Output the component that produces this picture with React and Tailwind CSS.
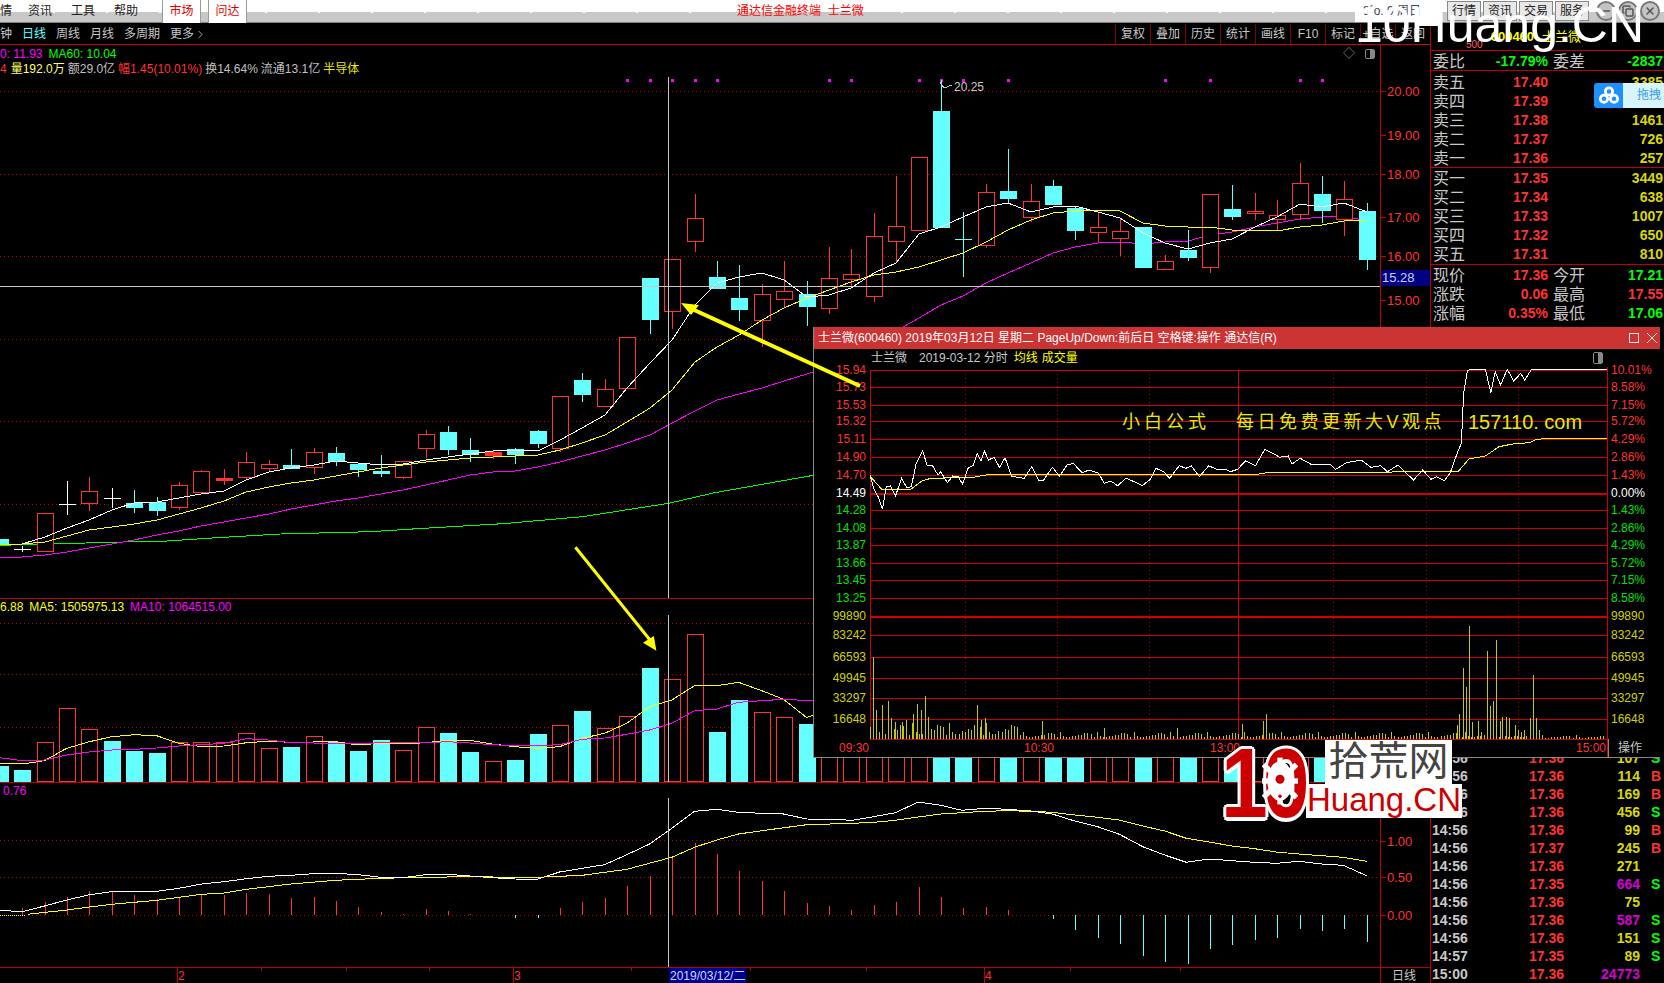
import React from "react";
import { ChevronRight, Minus, Copy, X as XIcon } from "lucide-react";

const RED = "#ff3232", LINE = "#c00000", CY = "#66ffff", YL = "#ffff00", MG = "#ff00ff", GR = "#00ff00";
const X = (i) => Math.round(22.2 + 22.41 * i);
const z4 = ([x, y]) => [x / 1.889, 340 + y / 3];
const z6 = ([x, y]) => [x / 1.889, 770 + y / 3];
const z5 = ([x, y]) => [830 + x / 1.88, 740 + y / 3];
const z3 = ([x, y]) => [810 + x / 1.836, 320 + y / 3];
const byIdx = (a) => a.map((y, i) => [X(i), y]);

const candles = [
  [-1,"c",539,539,544,544],[0,"w",546,549,549,552],[1,"r",513,513,551,551],[2,"w",481,504,504,515],[3,"r",477,491,503,511],[4,"w",488,498,498,508],
  [5,"c",490,503,507,513],[6,"c",497,502,510,516],[7,"r",482,485,507,510],[8,"r",470,471,492,493],[9,"s",469,478,480,485],[10,"r",452,462,477,480],
  [11,"r",460,464,468,472],[12,"c",449,465,468,468],[13,"r",448,452,467,474],[14,"c",447,453,461,466],[15,"c",463,464,469,477],[16,"c",455,471,473,477],
  [17,"r",461,461,477,479],[18,"r",430,434,448,458],[19,"c",426,432,449,455],[20,"c",438,450,454,462],[21,"s",451,452,455,459],[22,"c",448,449,454,464],
  [23,"c",430,431,443,448],[24,"r",396,396,448,452],[25,"c",373,380,394,402],[26,"r",379,389,406,407],[27,"r",337,337,388,388],[28,"c",278,278,319,334],
  [29,"r",259,259,311,329],[30,"r",194,218,241,252],[31,"c",261,277,288,288],[32,"c",265,298,309,321],[33,"r",284,294,320,347],[34,"r",261,291,299,307],
  [35,"c",281,294,306,326],[36,"r",247,278,308,314],[37,"r",249,274,279,287],[38,"r",213,236,296,302],[39,"r",176,226,241,262],[40,"r",157,157,230,230],
  [41,"c",80,111,227,227],[42,"x",212,239,239,277],[43,"r",184,192,245,248],[44,"c",149,191,198,203],[45,"r",184,201,217,222],[46,"c",180,186,204,204],
  [47,"c",207,208,230,240],[48,"r",213,227,232,242],[49,"r",218,231,238,256],[50,"c",227,227,267,268],[51,"r",255,261,269,269],[52,"c",230,250,257,261],
  [53,"r",194,194,267,273],[54,"c",185,209,216,220],[55,"r",193,211,213,220],[56,"r",200,215,219,230],[57,"r",163,183,214,220],[58,"c",176,194,210,223],
  [59,"r",181,199,219,236],[60,"c",203,211,259,270],
];
const ma5 = [544,537,528,520,510,503,502,498,494,491,480,472,468,465,461,463,465,464,460,457,454,451,450,451,440,428,415,388,363,340,305,283,277,273,280,297,295,288,273,263,234,227,217,207,203,212,207,206,212,218,233,243,249,243,239,227,217,204,207,203,212];
const ma10 = [544,542,536,530,527,524,520,514,508,501,492,487,483,480,476,472,468,465,462,460,458,457,456,455,450,443,435,422,408,390,362,347,335,320,308,298,290,282,275,272,267,260,253,242,230,220,213,211,210,211,223,226,227,227,230,230,231,227,225,221,220];
const ma20 = [557,555,552,548,544,540,535,531,526,522,518,514,509,505,501,498,494,490,485,480,475,472,471,467,462,456,450,443,435,423,411,400,394,388,381,374,367,355,345,331,318,305,296,283,273,263,253,247,243,242,244,242,241,235,232,227,223,219,217,216,221];
const ma60 = [[0,616],[232,606],[316,603],[400,594],[530,582],[700,575],[800,565],[950,551],[1100,530],[1263,490],[1350,458],[1540,405]].map(z4);
const dots = [27,28,29,30,31,36,37,40,41,42,44,51,53,57,58];

const vols = {"-1":766,0:770,1:742,2:708,3:729,4:741,5:751,6:753,7:742,8:742,9:742,10:733,11:748,12:747,13:736,14:742,15:751,16:740,17:750,18:727,19:733,20:752,21:761,22:760,23:734,24:725,25:711,26:728,27:716,28:668,29:679,30:634,31:732,32:700,33:712,34:717,35:724};
const cyanVol = [-1,0,4,5,6,12,14,15,16,19,20,22,23,25,28,31,32,35,41,42,44,46,47,50,52,54,58,60];
const volMa5 = [[0,1270],[42,1272],[84,1262],[126,1225],[169,1205],[211,1190],[254,1184],[296,1187],[338,1210],[381,1220],[423,1218],[466,1208],[507,1204],[549,1207],[634,1205],[677,1215],[719,1210],[761,1212],[804,1208],[845,1201],[888,1201],[930,1212],[972,1220],[1015,1225],[1057,1220],[1100,1195],[1142,1180],[1184,1150],[1227,1100],[1269,1080],[1312,1037],[1354,1037],[1395,1027],[1439,1052],[1480,1078],[1524,1133],[1540,1122]].map(z4);
const volMa10 = [[0,1253],[42,1262],[84,1260],[126,1245],[169,1236],[211,1230],[254,1228],[296,1224],[338,1218],[381,1214],[423,1210],[466,1196],[507,1200],[549,1208],[634,1210],[677,1211],[719,1208],[761,1208],[804,1208],[845,1205],[888,1209],[930,1214],[972,1217],[1015,1217],[1057,1214],[1100,1198],[1142,1194],[1184,1183],[1227,1170],[1269,1150],[1312,1112],[1354,1107],[1395,1087],[1439,1082],[1480,1078],[1540,1083]].map(z4);

const difA = [[0,421],[42,425],[84,408],[126,390],[169,374],[211,365],[296,364],[338,355],[381,342],[423,335],[466,326],[507,319],[549,316],[592,311],[634,310],[677,314],[719,322],[761,323],[804,314],[845,313],[888,318],[930,323],[972,327],[1015,328],[1057,306],[1100,295],[1142,284],[1184,254],[1227,222],[1269,175],[1312,124],[1354,118],[1395,127],[1439,130],[1480,132],[1524,147],[1568,148]].map(z6);
const difB = [[0,238],[42,241],[82,230],[123,218],[166,186],[208,196],[248,211],[292,205],[334,208],[377,213],[418,222],[460,243],[503,260],[544,283],[588,320],[629,345],[670,367],[713,357],[755,362],[798,367],[839,370],[881,364],[924,372],[965,376],[1009,407]].map(z5);
const deaA = [[52,433],[126,420],[169,411],[211,403],[296,391],[338,382],[381,373],[423,369],[466,358],[549,342],[634,331],[719,325],[804,322],[888,320],[972,322],[1015,322],[1100,316],[1184,298],[1269,262],[1312,232],[1354,210],[1395,192],[1439,182],[1524,164],[1568,162]].map(z6);
const deaB = [[0,252],[42,250],[82,247],[123,241],[166,231],[208,222],[248,218],[292,214],[334,212],[377,214],[418,217],[460,225],[503,232],[544,240],[588,258],[629,273],[670,295],[713,306],[755,318],[798,326],[839,336],[881,342],[924,347],[965,352],[1009,364]].map(z5);
const histA = [414,397,381,363,363,375,388,380,372,375,369,372,384,381,393,411,426,432,417,423,432,436,443,443,414,396,384,348,318,265,219,252,303,333,363,399,408];
const histB = [510,495,486,441,471,504,501,510,525,537,570,594,612,648,666,672,627,615,600,594,567,573,567,606];
const hist = [...histA.map((z) => 770 + z / 3), ...histB.map((z) => 740 + z / 3)];

const winPrice = [[110,465],[118,510],[125,530],[133,568],[140,500],[148,498],[157,528],[168,475],[178,503],[186,500],[195,430],[207,392],[215,437],[225,437],[235,465],[240,455],[252,488],[262,468],[272,470],[280,492],[290,445],[300,435],[307,400],[314,422],[320,393],[328,420],[338,412],[348,442],[358,413],[370,468],[380,472],[393,475],[407,440],[420,482],[428,482],[445,442],[458,468],[472,435],[483,430],[500,458],[512,450],[530,460],[540,490],[552,483],[565,497],[580,475],[595,485],[610,497],[625,478],[635,445],[650,455],[660,475],[678,437],[690,445],[700,438],[715,470],[732,437],[745,447],[762,447],[772,455],[785,448],[800,422],[818,437],[835,388],[850,400],[862,412],[878,408],[885,432],[900,415],[920,433],[955,433],[965,448],[985,428],[1012,420],[1030,442],[1048,437],[1060,455],[1080,435],[1095,460],[1108,480],[1125,450],[1140,478],[1150,470],[1165,482],[1175,460],[1190,392],[1196,370],[1200,220],[1207,152],[1212,148],[1240,148],[1250,218],[1258,155],[1268,195],[1280,148],[1292,183],[1305,160],[1312,180],[1325,148],[1464,148]].map(z3);
const winAvg = [[110,468],[133,510],[185,508],[205,483],[222,475],[300,472],[330,463],[820,463],[845,457],[1040,457],[1100,455],[1190,455],[1210,417],[1240,408],[1265,380],[1290,372],[1320,368],[1335,358],[1360,355],[1464,355]].map(z3);
const winRows = [149,200,254,304,358,410,464,519,569,623,674,728,780,833,888,946,1010,1073,1133,1196,1258];
const leftLabels = ["15.94","15.73","15.53","15.32","15.11","14.90","14.70","14.49","14.28","14.08","13.87","13.66","13.45","13.25","99890","83242","66593","49945","33297","16648"];
const rightLabels = ["10.01%","8.58%","7.15%","5.72%","4.29%","2.86%","1.43%","0.00%","1.43%","2.86%","4.29%","5.72%","7.15%","8.58%","99890","83242","66593","49945","33297","16648"];
const labelColor = (i) => (i < 7 ? "fill-[#ff3232]" : i === 7 ? "fill-white" : i < 14 ? "fill-[#00e000]" : "fill-[#d0d000]");
const spikes = [[117,1010],[122,1170],[133,1155],[145,1143],[150,1195],[157,1205],[170,1205],[178,1200],[190,1183],[198,1152],[205,1170],[212,1128],[218,1190],[307,1155],[315,1200],[322,1195],[426,1203],[540,1225],[675,1225],[794,1212],[832,1202],[838,1182],[1188,1215],[1193,1183],[1200,1045],[1205,1100],[1211,918],[1216,1205],[1227,1203],[1233,1235],[1244,993],[1250,1158],[1255,1143],[1260,960],[1267,1203],[1272,1190],[1278,1190],[1284,1195],[1295,1215],[1300,1230],[1306,1235],[1312,1230],[1322,1195],[1328,1065],[1334,1195],[1340,1230],[1345,1245]];
const pattern = [9,5,12,7,4,10,6,3,8,5,11,4];
const baseVol = Array.from({ length: 240 }, (_, k) => {
  const p = pattern[(k * 7) % 12];
  const s = k < 50 ? 1.3 : k < 212 ? 0.55 : 0.3;
  return [870 + 3.07 * k, Math.max(1, Math.round(p * s))];
});

const pts = (a) => a.map(([x, y]) => `${x.toFixed(1)},${y.toFixed(1)}`).join(" ");
const L = ({ d, c, w = 1 }) => <polyline points={pts(d)} fill="none" stroke={c} strokeWidth={w} />;
const Dot = ({ y, x2 = 1380 }) => <line x1="0" x2={x2} y1={y + 0.5} y2={y + 0.5} stroke="#c80000" strokeDasharray="1 3" />;
const Axis = ({ y0, y1 }) => <line x1="1380.5" x2="1380.5" y1={y0} y2={y1} stroke={LINE} />;
const Cross = ({ y0, y1 }) => <line x1="668.5" x2="668.5" y1={y0} y2={y1} stroke="#c8c8c8" />;
const AxisText = ({ y, t }) => (
  <g>
    <line x1="1380" x2="1386" y1={y + 0.5} y2={y + 0.5} stroke={LINE} />
    <text x="1387" y={y + 5} className="fill-[#ff3232] text-[13px]">{t}</text>
  </g>
);

function Candle({ c }) {
  const [i, t, h, a, b, l] = c;
  const x = X(i);
  if (t === "w" || t === "x") {
    const col = t === "w" ? "#ffffff" : CY;
    return (
      <g stroke={col}>
        <line x1={x + 0.5} x2={x + 0.5} y1={h} y2={l} />
        <line x1={x - 8} x2={x + 9} y1={a + 0.5} y2={a + 0.5} />
      </g>
    );
  }
  const col = t === "c" ? CY : RED;
  return (
    <g>
      <line x1={x + 0.5} x2={x + 0.5} y1={h} y2={l} stroke={col} />
      {t === "r" ? (
        <rect x={x - 8 + 0.5} y={a + 0.5} width="16" height={b - a} fill="#000" stroke={RED} />
      ) : (
        <rect x={x - 8} y={a} width="17" height={b - a + 1} fill={col} />
      )}
    </g>
  );
}

function MainChart() {
  return (
    <svg viewBox="0 77 1430 521" className="block w-[1430px] h-[521px]" shapeRendering="crispEdges">
      {[91, 174, 256, 339, 421, 504].map((y) => <Dot key={y} y={y} />)}
      <Axis y0={77} y1={598} />
      {dots.map((i) => <rect key={i} x={X(i) - 1} y="79" width="3" height="3" fill={MG} />)}
      <L d={ma60} c={GR} />
      <L d={[[0, 558], ...byIdx(ma20)]} c={MG} />
      {candles.map((c) => <Candle key={c[0]} c={c} />)}
      <L d={[[0, 544], ...byIdx(ma10)]} c={YL} />
      <L d={byIdx(ma5)} c="#ffffff" />
      <Cross y0={77} y1={598} />
      <line x1="0" x2="1380" y1="286.5" y2="286.5" stroke="#c8c8c8" />
      <polyline points="940,82 944,88 952,85" fill="none" stroke="#c8c8c8" />
      <text x="954" y="91" className="fill-[#c8c8c8] text-[12px]">20.25</text>
      {[[91,"20.00"],[135,"19.00"],[174,"18.00"],[217,"17.00"],[256,"16.00"],[300,"15.00"]].map(([y, t]) => <AxisText key={t} y={y} t={t} />)}
      <rect x="1381" y="270" width="49" height="16" fill="#000080" />
      <text x="1382" y="282" className="fill-[#c8d0ff] text-[13px]">15.28</text>
    </svg>
  );
}

function VolChart() {
  const items = [];
  for (let i = -1; i <= 60; i++) {
    const top = vols[i] ?? 745;
    const x = X(i);
    items.push(
      cyanVol.includes(i) ? (
        <rect key={i} x={x - 8} y={top} width="17" height={782 - top} fill={CY} />
      ) : (
        <rect key={i} x={x - 7.5} y={top + 0.5} width="16" height={781 - top} fill="#000" stroke={RED} />
      )
    );
  }
  return (
    <svg viewBox="0 615 1430 167" className="block w-[1430px] h-[167px]" shapeRendering="crispEdges">
      {[623, 674, 727].map((y) => <Dot key={y} y={y} />)}
      <Axis y0={615} y1={782} />
      {items}
      <L d={volMa5} c={YL} />
      <L d={volMa10} c={MG} />
      <Cross y0={615} y1={782} />
    </svg>
  );
}

function MacdChart() {
  return (
    <svg viewBox="0 798 1430 169" className="block w-[1430px] h-[169px]" shapeRendering="crispEdges">
      <Dot y={840} /><Dot y={877} /><Dot y={915} />
      <line x1="0" x2="26" y1="915.5" y2="915.5" stroke={YL} strokeDasharray="1 1" />
      <Axis y0={798} y1={967} />
      {hist.map((y, i) => {
        const up = y < 915;
        return <line key={i} x1={X(i) + 0.5} x2={X(i) + 0.5} y1={up ? y : 915} y2={up ? 915 : y} stroke={up ? RED : CY} />;
      })}
      <L d={[...deaA, ...deaB.filter(([x]) => x > 835)]} c={YL} />
      <L d={[...difA, ...difB.filter(([x]) => x > 835)]} c="#ffffff" />
      <Cross y0={798} y1={967} />
      {[[841,"1.00"],[877,"0.50"],[915,"0.00"]].map(([y, t]) => <AxisText key={t} y={y} t={t} />)}
    </svg>
  );
}

function DateAxis() {
  return (
    <svg viewBox="0 968 1430 15" className="block w-[1430px] h-[15px]" shapeRendering="crispEdges">
      <Axis y0={968} y1={983} />
      {[177, 513, 984].map((x) => <line key={x} x1={x + 0.5} x2={x + 0.5} y1="968" y2="983" stroke={LINE} />)}
      {[261, 346, 429, 631, 750, 866, 1070, 1180].map((x) => <line key={x} x1={x + 0.5} x2={x + 0.5} y1="968" y2="971" stroke={LINE} />)}
      <text x="178" y="980" className="fill-[#ff3232] text-[12px]">2</text>
      <text x="514" y="980" className="fill-[#ff3232] text-[12px]">3</text>
      <text x="985" y="980" className="fill-[#ff3232] text-[12px]">4</text>
      <rect x="669" y="968" width="77" height="15" fill="#000090" />
      <text x="670" y="980" className="fill-[#d0d8ff] text-[12px]">2019/03/12/二</text>
      <text x="1392" y="980" className="fill-[#c8c8c8] text-[12px]">日线</text>
    </svg>
  );
}

function TopBar() {
  const winIcons = [Minus, Copy, XIcon];
  return (
    <div className="relative flex h-[24px] w-[1664px] items-stretch bg-[linear-gradient(#ffffff_0,#ffffff_12px,#c8c8c8_12px,#c8c8c8_22px,#808080_22px,#808080_23px,#000000_23px)] text-[12px] leading-[22px] text-[#222]">
      <div className="absolute left-0 top-[12px] h-px w-[1355px] bg-[repeating-linear-gradient(90deg,#ffffff_0,#ffffff_2px,transparent_2px,transparent_53px)]" />
      <span className="relative w-[28px]">情</span>
      <span className="relative w-[43px]">资讯</span>
      <span className="relative w-[43px]">工具</span>
      <span className="relative w-[48px]">帮助</span>
      <span className="relative h-[23px] w-[39px] border-x border-[#999] bg-white text-center text-[#e00000]">市场</span>
      <span className="relative ml-[7px] h-[23px] w-[39px] border-x border-[#999] bg-white text-center text-[#e00000]">问达</span>
      <span className="relative ml-[490px] text-[#ff0000]">通达信金融终端&nbsp;&nbsp;士兰微</span>
      <div className="relative ml-auto flex w-[309px] items-start">
        <div className="h-[22px] w-[84px] bg-white pl-[8px] text-[#445]">3´o. 9 周日</div>
        <div className="ml-[8px] flex gap-[2px] pt-px">
          {["行情", "资讯", "交易", "服务"].map((t) => (
            <span key={t} className="h-[20px] w-[34px] border border-[#888] bg-[#e8e8e8] text-center leading-[19px]">{t}</span>
          ))}
        </div>
        <div className="ml-auto flex items-start gap-[2px] pr-[4px] pt-px">
          {winIcons.map((Ic, i) => (
            <span key={i} className="flex h-[20px] w-[20px] items-center justify-center rounded-full border-2 border-[#777] bg-[#c4c4c4]">
              <Ic size={12} strokeWidth={3} color="#555" />
            </span>
          ))}
        </div>
      </div>
    </div>
  );
}

function Toolbar() {
  return (
    <div className="flex h-[21px] items-stretch justify-between border-b border-[#d00000] text-[12px] leading-[20px] text-[#c8c8c8]">
      <div className="flex gap-[10px]">
        <span>钟</span>
        <span className="text-[#66ffff]">日线</span>
        <span>周线</span>
        <span>月线</span>
        <span>多周期</span>
        <span className="flex items-center">更多<ChevronRight size={13} strokeWidth={1.5} /></span>
      </div>
      <div className="flex">
        {["复权", "叠加", "历史", "统计", "画线", "F10", "标记", "+自选", "返回"].map((t) => (
          <span key={t} className="w-[35px] whitespace-nowrap border-l border-[#800000] text-center">{t}</span>
        ))}
      </div>
    </div>
  );
}

const ToggleIcon = ({ cls = "h-[10px]" }) => (
  <span className={`flex w-[10px] rounded-[2px] border border-[#888] ${cls}`}>
    <span className="ml-auto h-full w-[4px] bg-[#888]" />
  </span>
);

function Left() {
  return (
    <div className="flex w-[1431px] shrink-0 flex-col border-r border-[#c00000]">
      <Toolbar />
      <div className="flex h-[554px] flex-col border-b border-[#c00000]">
        <div className="h-[32px] text-[12px]">
          <div className="flex h-[18px] w-[1381px] items-center justify-between border-r border-[#c00000] pr-[5px] leading-[18px]">
            <div className="flex gap-[6px]">
              <span className="text-[#ff00ff]">0: 11.93</span>
              <span className="text-[#00ff00]">MA60: 10.04</span>
            </div>
            <div className="flex items-center gap-[10px]">
              <span className="text-[12px] leading-none text-[#888]">◇</span>
              <ToggleIcon />
            </div>
          </div>
          <div className="flex h-[14px] w-[1381px] gap-[3px] whitespace-nowrap border-r border-[#c00000] leading-[12px] text-[#c0c0c0]">
            <span className="text-[#ff3232]">4</span>
            <span className="ml-px text-[#ffff66]">量192.0万</span>
            <span>额29.0亿</span>
            <span className="text-[#ff3232]">幅1.45(10.01%)</span>
            <span>换14.64%</span>
            <span>流通13.1亿</span>
            <span className="text-[#e8e800]">半导体</span>
          </div>
        </div>
        <MainChart />
      </div>
      <div className="flex h-[184px] flex-col border-b border-[#c00000]">
        <div className="flex h-[16px] w-[1381px] gap-[6px] border-r border-[#c00000] text-[12px] leading-[16px]">
          <span className="text-[#ffff00]">6.88</span>
          <span className="text-[#ffff00]">MA5: 1505975.13</span>
          <span className="text-[#ff00ff]">MA10: 1064515.00</span>
        </div>
        <VolChart />
      </div>
      <div className="flex h-[185px] flex-col border-b border-[#c00000]">
        <div className="h-[15px] w-[1381px] border-r border-[#c00000] pl-[3px] text-[12px] leading-[16px] text-[#ff00ff]">0.76</div>
        <MacdChart />
      </div>
      <DateAxis />
    </div>
  );
}

const sells = [["卖五","17.40","3385"],["卖四","17.39",""],["卖三","17.38","1461"],["卖二","17.37","726"],["卖一","17.36","257"]];
const buys = [["买一","17.35","3449"],["买二","17.34","638"],["买三","17.33","1007"],["买四","17.32","650"],["买五","17.31","810"]];
const stats = [["现价","17.36","今开","17.21","text-[#00ff00]"],["涨跌","0.06","最高","17.55","text-[#ff3232]"],["涨幅","0.35%","最低","17.06","text-[#00ff00]"]];
const trades = [
  ["14:56","17.36","107","S"],["14:56","17.36","114","B"],["14:56","17.36","169","B"],["14:56","17.36","456","S"],["14:56","17.36","99","B"],["14:56","17.37","245","B"],["14:56","17.36","271",""],
  ["14:56","17.35","664","S","p"],["14:56","17.36","75",""],["14:56","17.36","587","S","p"],["14:56","17.36","151","S"],["14:57","17.35","89","S"],["15:00","17.36","24773","","p"],
];

function QuoteRow({ r }) {
  return (
    <div className="grid h-[19px] grid-cols-[34px_81px_1fr] items-center pl-[2px] pr-px">
      <span className="text-[16px] leading-[19px] text-[#c8c8c8]">{r[0]}</span>
      <span className="text-right text-[14px] font-bold text-[#ff3232]">{r[1]}</span>
      <span className="text-right text-[14px] font-bold text-[#d8d800]">{r[2]}</span>
    </div>
  );
}

function Right() {
  return (
    <div className="flex flex-1 flex-col overflow-hidden">
      <div className="flex h-[27px] items-start gap-[8px] border-b border-[#c00000] pl-[35px] pt-[4px] text-[13px] font-bold leading-[18px] text-[#ffff00]">
        <span className="self-end text-[10px] font-normal leading-[10px] text-[#ff6060]">500</span>
        <span>600460</span>
        <span className="font-normal">士兰微</span>
      </div>
      <div className="grid h-[20px] grid-cols-[34px_81px_auto_1fr] items-center border-b border-[#c00000] pl-[2px] pr-px">
        <span className="text-[16px] leading-[19px] text-[#c8c8c8]">委比</span>
        <span className="text-right text-[14px] font-bold text-[#00ff00]">-17.79%</span>
        <span className="ml-[5px] text-[16px] leading-[19px] text-[#c8c8c8]">委差</span>
        <span className="text-right text-[14px] font-bold text-[#00ff00]">-2837</span>
      </div>
      <div className="h-[97px] border-b border-[#c00000] pt-[1px]">
        {sells.map((r) => <QuoteRow key={r[0]} r={r} />)}
      </div>
      <div className="h-[97px] border-b border-[#c00000]">
        {buys.map((r) => <QuoteRow key={r[0]} r={r} />)}
      </div>
      {stats.map((r) => (
        <div key={r[0]} className="grid h-[19px] grid-cols-[34px_81px_auto_1fr] items-center pl-[2px] pr-px">
          <span className="text-[16px] leading-[19px] text-[#c8c8c8]">{r[0]}</span>
          <span className="text-right text-[14px] font-bold text-[#ff3232]">{r[1]}</span>
          <span className="ml-[5px] text-[16px] leading-[19px] text-[#c8c8c8]">{r[2]}</span>
          <span className={`text-right text-[14px] font-bold ${r[4]}`}>{r[3]}</span>
        </div>
      ))}
      <div className="mt-auto">
        {trades.map((r, i) => (
          <div key={i} className="grid h-[18px] grid-cols-[40px_93px_76px_1fr] items-center text-[14px] font-bold leading-[18px]">
            <span className="pl-px text-[#c8c8c8]">{r[0]}</span>
            <span className="text-right text-[#ff3232]">{r[1]}</span>
            <span className={`text-right ${r[4] ? "text-[#d400d4]" : "text-[#d8d800]"}`}>{r[2]}</span>
            <span className={`pl-[11px] ${r[3] === "S" ? "text-[#00ff00]" : "text-[#ff3232]"}`}>{r[3]}</span>
          </div>
        ))}
      </div>
    </div>
  );
}

function PopupChart() {
  const vLines = [285, 454, 623, 961, 1131, 1300];
  return (
    <svg viewBox="814 367 846 390" className="block h-[390px] w-[846px] overflow-visible" shapeRendering="crispEdges">
      {winRows.map((z, i) => {
        const y = Math.round(320 + z / 3);
        return <rect key={z} x="870" y={y} width="738" height={i === 7 || i === 14 ? 2 : 1} fill="#d00000" />;
      })}
      {vLines.map((z) => {
        const x = Math.round(810 + z / 1.836) + 0.5;
        return <line key={z} x1={x} x2={x} y1="370" y2="739" stroke="#c00000" strokeDasharray="1 3" />;
      })}
      <line x1="1238.5" x2="1238.5" y1="370" y2="739" stroke="#d00000" />
      <line x1="870.5" x2="870.5" y1="370" y2="739" stroke="#d00000" />
      <line x1="1607.5" x2="1607.5" y1="367" y2="757" stroke="#d00000" />
      <line x1="1608" x2="1608" y1="739" y2="757" stroke="#888" />
      {baseVol.map(([x, h], i) => <line key={i} x1={x} x2={x} y1={739} y2={739 - h} stroke="#c8c800" />)}
      {spikes.map(([z, y]) => {
        const x = 810 + z / 1.836;
        return <line key={z} x1={x} x2={x} y1={739} y2={320 + y / 3} stroke="#c8c800" />;
      })}
      <L d={winAvg} c={YL} w={1} />
      <L d={winPrice} c="#ffffff" w={1} />
      {leftLabels.map((t, i) => (
        <text key={i} x="866" y={Math.round(320 + winRows[i] / 3) + 4} textAnchor="end" className={`text-[12px] ${labelColor(i)}`}>{t}</text>
      ))}
      {rightLabels.map((t, i) => (
        <text key={i} x="1611" y={Math.round(320 + winRows[i] / 3) + 4} className={`text-[12px] ${labelColor(i)}`}>{t}</text>
      ))}
      <text x="839" y="752" className="fill-[#ff3232] text-[12px]">09:30</text>
      <text x="1024" y="752" className="fill-[#ff3232] text-[12px]">10:30</text>
      <text x="1210" y="752" className="fill-[#ff3232] text-[12px]">13:00</text>
      <text x="1576" y="752" className="fill-[#ff3232] text-[12px]">15:00</text>
      <text x="1618" y="752" className="fill-[#c8c8c8] text-[12px]">操作</text>
      <text x="1122" y="428" className="fill-[#e8e800] text-[18px]" letterSpacing="4">小白公式</text>
      <text x="1236" y="428" className="fill-[#e8e800] text-[18px]" letterSpacing="3.5">每日免费更新大V观点</text>
      <text x="1468" y="429" className="fill-[#e8e800] text-[20px]">157110. com</text>
    </svg>
  );
}

function Popup() {
  return (
    <div className="absolute left-[813px] top-[327px] flex h-[431px] w-[847px] flex-col border-b border-l border-[#888] bg-black text-[12px]">
      <div className="flex h-[22px] items-center justify-between bg-[#cc3333] pl-[4px] pr-[2px] text-[12px] text-white">
        <span>士兰微(600460) 2019年03月12日 星期二 PageUp/Down:前后日 空格键:操作 通达信(R)</span>
        <span className="flex items-center gap-[8px] pr-[1px]">
          <span className="h-[10px] w-[10px] border border-[#e8e8e8]" />
          <svg viewBox="0 0 10 10" className="h-[10px] w-[10px]"><path d="M0 0L10 10M10 0L0 10" stroke="#e8e8e8" fill="none" /></svg>
        </span>
      </div>
      <div className="flex h-[18px] items-center justify-between pl-[57px] pr-[57px] leading-[18px]">
        <span className="flex gap-[6px] whitespace-nowrap text-[#c8c8c8]">
          <span>士兰微</span>
          <span className="ml-[6px]">2019-03-12 分时</span>
          <span className="text-[#ffff00]">均线</span>
          <span className="-ml-[2px] text-[#ffff00]">成交量</span>
        </span>
        <ToggleIcon cls="h-[12px]" />
      </div>
      <PopupChart />
    </div>
  );
}

const halo = "[text-shadow:3px_0_#fff,-3px_0_#fff,0_3px_#fff,0_-3px_#fff,2px_2px_#fff,-2px_-2px_#fff,2px_-2px_#fff,-2px_2px_#fff]";

function Logo() {
  return (
    <div className="absolute left-[1220px] top-[740px] h-[82px] w-[242px]">
      <span className={`absolute left-[1px] top-[-5px] origin-top scale-y-[1.16] text-[84px] font-bold leading-[84px] tracking-[-5px] text-[#cc0000] ${halo}`}>10</span>
      <svg viewBox="0 0 40 60" className="absolute left-[42px] top-[12px] h-[58px] w-[36px]">
        <ellipse cx="20" cy="30" rx="14" ry="22" fill="#fff" />
        {[0, 45, 90, 135].map((a) => (
          <rect key={a} x="17" y="4" width="6" height="52" fill="#fff" transform={`rotate(${a} 20 30)`} />
        ))}
        <circle cx="20" cy="28" r="5" fill="#cc0000" />
        <circle cx="20" cy="47" r="2" fill="#cc0000" />
      </svg>
      <div className="absolute left-[105px] top-0 h-[44px] w-[127px] bg-white text-center text-[40px] leading-[42px] text-[#444]">拾荒网</div>
      <div className="absolute left-[86px] top-[44px] h-[34px] w-[156px] bg-white text-center text-[33px] leading-[32px] text-[#cc0000]">Huang.CN</div>
    </div>
  );
}

function DragWidget() {
  return (
    <div className="absolute left-[1594px] top-[83px] flex h-[25px] w-[70px] overflow-hidden rounded-l-[3px] text-[12px]">
      <div className="flex w-[29px] items-center justify-center bg-[#1e90ff]">
        <svg viewBox="0 0 24 24" className="h-[22px] w-[22px]" fill="none" stroke="#fff" strokeWidth="3">
          <circle cx="12" cy="7" r="4" />
          <circle cx="6.5" cy="15" r="4" />
          <circle cx="17.5" cy="15" r="4" />
        </svg>
      </div>
      <div className="flex-1 whitespace-nowrap bg-[#d8f4ff] pl-[14px] leading-[25px] text-[#36a0e8]">拖拽</div>
    </div>
  );
}

function Arrows() {
  return (
    <svg viewBox="0 0 1664 983" className="pointer-events-none absolute left-0 top-0 h-[983px] w-[1664px]">
      <line x1="860" y1="386" x2="692" y2="309" stroke="#ffff00" strokeWidth="4" />
      <polygon points="681,303 699,305 691,315" fill="#ffff00" />
      <line x1="575.4" y1="547.3" x2="650" y2="640" stroke="#ffff00" strokeWidth="3" />
      <polygon points="656.4,650.7 653.8,636 643,642.7" fill="#ffff00" />
    </svg>
  );
}

export default function App() {
  return (
    <div className="relative h-[983px] w-[1664px] overflow-hidden bg-black [font-family:'Liberation_Sans','Noto_Sans_CJK_SC',sans-serif]">
      <TopBar />
      <div className="flex h-[959px]">
        <Left />
        <Right />
      </div>
      <Popup />
      <Arrows />
      <DragWidget />
      <Logo />
      <div className="absolute left-[1355px] top-[-4px] whitespace-nowrap text-[50px] leading-[58px] text-white">10Huang.CN</div>
    </div>
  );
}
